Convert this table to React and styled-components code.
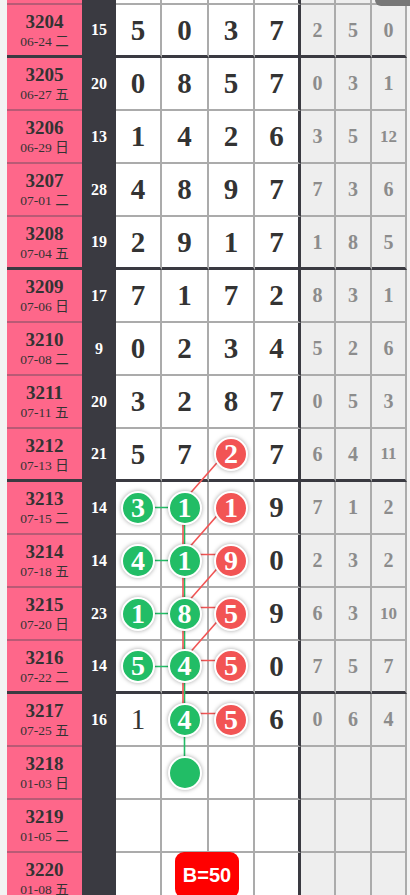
import React from 'react';
import styled, { createGlobalStyle } from 'styled-components';

const PINK = '#fe678a';
const PINK_LINE = '#b95a75';
const DARK = '#3a3a41';
const GRID = '#ababab';
const GREEN = '#22bd66';
const RED = '#f25454';

const GlobalStyle = createGlobalStyle`
  html, body { margin: 0; padding: 0; background: #f3f3f3; overflow: hidden; }
  body { font-family: "Liberation Serif", "Noto Sans CJK SC", serif; }
`;

const Page = styled.div`
  position: relative;
  width: 410px;
  height: 895px;
  overflow: hidden;
  padding-left: 7px;
  box-sizing: border-box;
`;

const Chart = styled.div`
  position: relative;
  width: 400px;
  margin-top: -48px;
`;

const Row = styled.div`
  display: grid;
  grid-template-columns: 75px 34px 46px 47px 46px 46px 35px 36px 35px;
  height: 53px;
`;

const BaseCell = styled.div`
  box-sizing: border-box;
  display: flex;
  align-items: center;
  justify-content: center;
  border-bottom: ${p => (p.$thick ? `3px solid ${DARK}` : `2px solid ${GRID}`)};
`;

const IssueCell = styled(BaseCell)`
  flex-direction: column;
  background: ${PINK};
  color: #333;
  border-bottom: ${p => (p.$thick ? `3px solid ${DARK}` : `2px solid ${PINK_LINE}`)};
`;

const IssueNo = styled.div`
  font-weight: bold;
  font-size: 19px;
  line-height: 22px;
`;

const IssueDate = styled.div`
  font-size: 13.5px;
  line-height: 17px;
`;

const SumCell = styled(BaseCell)`
  background: ${DARK};
  color: #fff;
  font-weight: bold;
  font-size: 16px;
  border-bottom: ${p => (p.$thick ? '3px' : '2px')} solid ${DARK};
`;

const DigitCell = styled(BaseCell)`
  background: #fff;
  color: #333;
  font-weight: ${p => (p.$light ? 'normal' : 'bold')};
  font-size: 29px;
  border-right: ${p => (p.$edge ? `3px solid ${DARK}` : `2px solid ${GRID}`)};
`;

const StatCell = styled(BaseCell)`
  background: #eeeeee;
  color: #8c8c8c;
  font-weight: bold;
  font-size: ${p => (p.$small ? '17px' : '20px')};
  border-right: 2px solid ${GRID};
`;

const Ball = styled.span`
  position: relative;
  z-index: 2;
  box-sizing: border-box;
  width: 34px;
  height: 34px;
  border-radius: 50%;
  border: 2px solid #fff;
  background: ${p => p.$color};
  box-shadow: 0 0 4px rgba(0, 0, 0, 0.35);
  color: #fff;
  font-weight: bold;
  font-size: 28px;
  line-height: 30px;
  text-align: center;
`;

const Links = styled.svg`
  position: absolute;
  left: 0;
  top: 0;
  z-index: 1;
  pointer-events: none;
`;

const TopTab = styled.div`
  position: absolute;
  top: 0;
  right: 0;
  width: 35px;
  height: 6px;
  background: #777;
  border-bottom-left-radius: 10px;
`;

const Badge = styled.div`
  position: absolute;
  left: 175px;
  top: 852px;
  width: 64px;
  height: 46px;
  border-radius: 9px;
  background: #ff0000;
  color: #fff;
  font-family: "Liberation Sans", Arial, sans-serif;
  font-weight: bold;
  font-size: 20px;
  display: flex;
  align-items: center;
  justify-content: center;
  z-index: 3;
`;

// digit: number, or {v, b:'g'|'r'}, or {v, light:true}
const g = v => ({ v, b: 'g' });
const r = v => ({ v, b: 'r' });

const EMPTY4 = [null, null, null, null];
const EMPTY3 = [null, null, null];

const rows = [
  ['3203', '', '', '', EMPTY4, EMPTY3],
  ['3204', '3204', '06-24 二', '15', [5, 0, 3, 7], [2, 5, 0]],
  ['3205', '3205', '06-27 五', '20', [0, 8, 5, 7], [0, 3, 1]],
  ['3206', '3206', '06-29 日', '13', [1, 4, 2, 6], [3, 5, 12]],
  ['3207', '3207', '07-01 二', '28', [4, 8, 9, 7], [7, 3, 6]],
  ['3208', '3208', '07-04 五', '19', [2, 9, 1, 7], [1, 8, 5]],
  ['3209', '3209', '07-06 日', '17', [7, 1, 7, 2], [8, 3, 1]],
  ['3210', '3210', '07-08 二', '9', [0, 2, 3, 4], [5, 2, 6]],
  ['3211', '3211', '07-11 五', '20', [3, 2, 8, 7], [0, 5, 3]],
  ['3212', '3212', '07-13 日', '21', [5, 7, r(2), 7], [6, 4, 11]],
  ['3213', '3213', '07-15 二', '14', [g(3), g(1), r(1), 9], [7, 1, 2]],
  ['3214', '3214', '07-18 五', '14', [g(4), g(1), r(9), 0], [2, 3, 2]],
  ['3215', '3215', '07-20 日', '23', [g(1), g(8), r(5), 9], [6, 3, 10]],
  ['3216', '3216', '07-22 二', '14', [g(5), g(4), r(5), 0], [7, 5, 7]],
  ['3217', '3217', '07-25 五', '16', [{ v: 1, light: true }, g(4), r(5), 6], [0, 6, 4]],
  ['3218', '3218', '01-03 日', '', [null, g(''), null, null], EMPTY3],
  ['3219', '3219', '01-05 二', '', EMPTY4, EMPTY3],
  ['3220', '3220', '01-08 五', '', EMPTY4, EMPTY3],
];

const ROW_H = 53;
const COL_X = [131, 177.5, 224];
const pt = (issue, col, dx = 0, dy = 0) => [
  COL_X[col] + dx,
  (issue - 3203) * ROW_H + 25.5 + dy,
];

const RDX = -1.5;
const RDY = -6;

const greenSegs = [
  [3213, 0, 3213, 1],
  [3214, 0, 3214, 1],
  [3215, 0, 3215, 1],
  [3216, 0, 3216, 1],
  [3213, 1, 3218, 1],
];

const redSegs = [
  [3212, 2, 3213, 1],
  [3213, 2, 3214, 1],
  [3214, 2, 3215, 1],
  [3215, 2, 3216, 1],
  [3214, 1, 3214, 2],
  [3215, 1, 3215, 2],
  [3216, 1, 3216, 2],
  [3217, 1, 3217, 2],
  [3213, 1, 3217, 1],
];

function Digit({ d, i, thick }) {
  const edge = i === 3;
  if (d === null || d === undefined) return <DigitCell $thick={thick} $edge={edge} />;
  if (typeof d === 'number') return <DigitCell $thick={thick} $edge={edge}>{d}</DigitCell>;
  if (d.b) {
    return (
      <DigitCell $thick={thick} $edge={edge}>
        <Ball $color={d.b === 'g' ? GREEN : RED}>{d.v}</Ball>
      </DigitCell>
    );
  }
  return (
    <DigitCell $thick={thick} $edge={edge} $light={d.light}>
      {d.v}
    </DigitCell>
  );
}

export default function App() {
  const height = rows.length * ROW_H;
  return (
    <Page>
      <GlobalStyle />
      <Chart>
        {rows.map(([key, no, date, sum, digits, stats]) => {
          const thick = Number(key) % 4 === 0;
          return (
            <Row key={key}>
              <IssueCell $thick={thick}>
                {no && <IssueNo>{no}</IssueNo>}
                {date && <IssueDate>{date}</IssueDate>}
              </IssueCell>
              <SumCell $thick={thick}>{sum}</SumCell>
              {digits.map((d, i) => (
                <Digit key={i} d={d} i={i} thick={thick} />
              ))}
              {stats.map((s, i) => (
                <StatCell key={i} $thick={thick} $small={s !== null && s >= 10}>
                  {s}
                </StatCell>
              ))}
            </Row>
          );
        })}
        <Links width="400" height={height} viewBox={`0 0 400 ${height}`}>
          {greenSegs.map(([a, ca, b, cb], k) => {
            const [x1, y1] = pt(a, ca);
            const [x2, y2] = pt(b, cb);
            return <line key={'g' + k} x1={x1} y1={y1} x2={x2} y2={y2} stroke={GREEN} strokeWidth="1.6" />;
          })}
          {redSegs.map(([a, ca, b, cb], k) => {
            const [x1, y1] = pt(a, ca, RDX, RDY);
            const [x2, y2] = pt(b, cb, RDX, RDY);
            return <line key={'r' + k} x1={x1} y1={y1} x2={x2} y2={y2} stroke={RED} strokeWidth="1.6" />;
          })}
        </Links>
      </Chart>
      <TopTab />
      <Badge>B=50</Badge>
    </Page>
  );
}
